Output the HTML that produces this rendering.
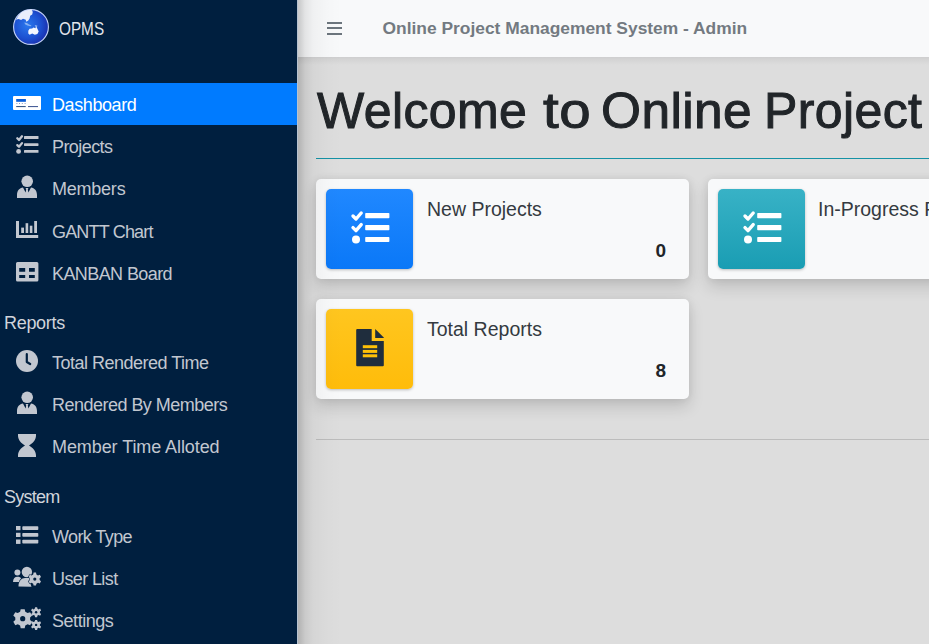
<!DOCTYPE html>
<html><head><meta charset="utf-8">
<style>
*{box-sizing:border-box;margin:0;padding:0}
html,body{width:929px;height:644px;overflow:hidden;font-family:"Liberation Sans",sans-serif;}
body{background:#dddddd;position:relative}
#shadow{position:absolute;left:297px;top:0;width:50px;height:644px;background:linear-gradient(to right,rgba(0,0,0,.2) 0px,rgba(0,0,0,.17) 3px,rgba(0,0,0,.085) 8px,rgba(0,0,0,.035) 16px,rgba(0,0,0,.01) 30px,rgba(0,0,0,0) 45px);z-index:4}
#side{position:absolute;left:0;top:0;width:297px;height:644px;background:#001f3f;z-index:5}
.logo{position:absolute;left:13px;top:9px;width:36px;height:36px}
.brand{position:absolute;left:59px;top:19.5px;color:#e2e6ec;font-size:17.5px;line-height:18px;transform:scaleX(0.875);transform-origin:0 0;white-space:nowrap}
.t{position:absolute;left:52px;font-size:18px;line-height:18px;color:#c2c7d0;white-space:nowrap}
.act{position:absolute;left:0;top:83px;width:297px;height:42px;background:#007bff}
.hdr{position:absolute;left:4px;font-size:18px;line-height:18px;color:#d0d4db;white-space:nowrap}
svg.ic{position:absolute;overflow:visible}
#nav{position:absolute;left:297px;top:0;width:632px;height:57px;background:#f8f9fa;z-index:3}
#navsh{position:absolute;left:297px;top:57px;width:632px;height:8px;background:linear-gradient(rgba(0,0,10,.065),rgba(0,0,10,.045) 30%,rgba(0,0,0,0));z-index:3}
#sline{position:absolute;left:297px;top:0;width:1px;height:644px;background:#b6c2d0;z-index:6}
.burger{position:absolute;left:30px;top:21.5px;width:15px;height:13px}
.burger i{position:absolute;left:0;width:15px;height:2px;background:#6c757d}
.title{position:absolute;left:85.5px;top:19px;color:#737a81;font-size:17.4px;line-height:18px;font-weight:bold;white-space:nowrap}
h1{position:absolute;left:317px;top:86px;font-size:50px;line-height:50px;letter-spacing:0.4px;font-weight:normal;color:#212529;white-space:nowrap;-webkit-text-stroke:1px #212529}
h1 span{position:absolute;top:0;transform-origin:0 0}
.hr1{position:absolute;left:316px;top:158px;width:613px;height:1px;background:#1592a5}
.hr2{position:absolute;left:316px;top:439px;width:613px;height:1px;background:#bcbcbc}
.card{position:absolute;width:373px;height:100px;background:#f8f9fa;border-radius:5px;box-shadow:0 0 8px rgba(0,0,0,.08),0 8px 16px rgba(0,0,0,.14)}
.box{position:absolute;left:10px;top:10px;width:87px;height:80px;border-radius:5px;box-shadow:0 1px 3px rgba(0,0,0,.25)}
.box svg{position:absolute;left:0;top:0}
.ctext{position:absolute;left:111px;top:20px;font-size:19.5px;line-height:20px;color:#343a40;white-space:nowrap}
.cnum{position:absolute;left:339.5px;top:61.5px;font-size:19px;line-height:20px;font-weight:bold;color:#212529}
</style></head><body>
<div id="shadow"></div>
<div id="side">
  <svg class="logo" width="36" height="36" viewBox="0 0 36 36">
    <defs>
      <radialGradient id="gl" cx="0.4" cy="0.45" r="0.65">
        <stop offset="0" stop-color="#2a78ee"/>
        <stop offset="0.6" stop-color="#1c4fd0"/>
        <stop offset="1" stop-color="#1a2aa8"/>
      </radialGradient>
    </defs>
    <circle cx="18" cy="18" r="17.4" fill="url(#gl)" stroke="#c4d3fa" stroke-width="1.1"/>
    <path d="M2.9 10.7 L5.5 10 L8.1 11 L10 9.7 L12.7 10.7 L13.3 12.7 L15.3 11.4 L16.6 9.4 L17.2 6.8 L19.2 5.5 L19.8 2.9 L18.5 0.6 A17.4 17.4 0 0 0 2.9 10.7 Z" fill="#e9eefb"/>
    <path d="M11.4 13.5 L14 14 L16 15.5 L18.5 16.5 L17.5 17.3 L14.5 16.5 L12 15.2 Z" fill="#9fc0f5" opacity="0.8"/>
    <path d="M21.8 16 L24.4 16.5 L24 17.9 L22 17.5 Z" fill="#9fc0f5" opacity="0.8"/>
    <path d="M15.3 21.8 L16.6 19.8 L19.2 19.5 L20.5 18.5 L22.4 19.2 L23.1 17.2 L24.4 19.8 L25.7 22.4 L24.4 25 L21.8 25.7 L19.2 24.4 L16.6 25.7 L15.3 24.4 Z" fill="#f4f7ff"/>
  </svg>
  <div class="brand">OPMS</div>

  <div class="act"></div>
  <svg class="ic" style="left:13px;top:96px" width="28" height="14" viewBox="0 0 28 14">
    <rect x="0" y="0" width="28" height="14" rx="1" fill="#fff"/>
    <rect x="3.2" y="3" width="9.7" height="2.8" fill="#0a5ed8"/>
    <g fill="#8a9cc8"><rect x="3.4" y="7" width="1" height="1"/><rect x="6" y="7" width="1" height="1"/><rect x="8.8" y="7" width="1" height="1"/><rect x="11.6" y="7" width="1" height="1"/></g>
    <rect x="3.2" y="10" width="9.5" height="1.1" fill="#3a5a88"/>
    <rect x="15" y="10" width="10" height="1.1" fill="#4a5f98"/>
  </svg>
  <div class="t" style="top:96px;color:#fff;letter-spacing:-0.41px">Dashboard</div>

  <svg class="ic" style="left:16px;top:135px" width="23" height="19" viewBox="0 0 23 19">
    <g fill="#c2c7d0">
      <path d="M1.3 3.3 L3 5 L6 1.3" stroke="#c2c7d0" stroke-width="2.3" fill="none" stroke-linecap="round" stroke-linejoin="round"/>
      <path d="M1.3 10.1 L3 11.8 L6 8.1" stroke="#c2c7d0" stroke-width="2.3" fill="none" stroke-linecap="round" stroke-linejoin="round"/>
      <circle cx="2.6" cy="16.4" r="2.4"/>
      <rect x="8" y="1" width="14.5" height="3" rx="0.6"/>
      <rect x="8" y="8.3" width="14.5" height="2.6" rx="0.6"/>
      <rect x="8" y="15" width="14.5" height="2.8" rx="0.6"/>
    </g>
  </svg>
  <div class="t" style="top:138px;letter-spacing:-0.57px">Projects</div>

  <svg class="ic" style="left:17px;top:175px" width="20" height="23" viewBox="0 0 20 23">
    <g fill="#c2c7d0">
      <circle cx="10.2" cy="6.3" r="5.8"/>
      <path d="M0 23 L0 20 C0 15.5 2.5 13 6 12.5 L8.6 17.5 L9.2 14.5 L8.6 13 L11.4 13 L10.8 14.5 L11.4 17.5 L14 12.5 C17.5 13 20 15.5 20 20 L20 23 Z"/>
    </g>
  </svg>
  <div class="t" style="top:180px;letter-spacing:-0.23px">Members</div>

  <svg class="ic" style="left:16px;top:221px" width="23" height="17" viewBox="0 0 23 17">
    <g fill="#c2c7d0">
      <rect x="0" y="0" width="3" height="17"/>
      <rect x="0" y="14" width="22.2" height="3"/>
      <rect x="5.2" y="6.6" width="2.8" height="5.4"/>
      <rect x="9.6" y="2.2" width="2.6" height="9.8"/>
      <rect x="13.8" y="4.7" width="2.6" height="7.3"/>
      <rect x="18.2" y="0" width="2.8" height="12"/>
    </g>
  </svg>
  <div class="t" style="top:223px;letter-spacing:-0.82px">GANTT Chart</div>

  <svg class="ic" style="left:16px;top:262px" width="23" height="20" viewBox="0 0 23 20">
    <path fill="#c2c7d0" fill-rule="evenodd" d="M1.5 0 H20.9 A1.5 1.5 0 0 1 22.4 1.5 V18 A1.5 1.5 0 0 1 20.9 19.5 H1.5 A1.5 1.5 0 0 1 0 18 V1.5 A1.5 1.5 0 0 1 1.5 0 Z M3.2 6 V9.7 H9.2 V6 Z M13 6 V9.7 H18.8 V6 Z M3.2 12.9 V16 H9.2 V12.9 Z M13 12.9 V16 H18.8 V12.9 Z"/>
  </svg>
  <div class="t" style="top:265px;letter-spacing:-0.59px">KANBAN Board</div>

  <div class="hdr" style="top:314px;letter-spacing:-0.3px">Reports</div>

  <svg class="ic" style="left:16px;top:350px" width="22" height="22" viewBox="0 0 22 22">
    <circle cx="11" cy="11" r="11" fill="#c2c7d0"/>
    <path d="M10.8 4.2 V12 L14.2 14" fill="none" stroke="#001f3f" stroke-width="2.2" stroke-linecap="round" stroke-linejoin="round"/>
  </svg>
  <div class="t" style="top:353.5px;letter-spacing:-0.5px">Total Rendered Time</div>

  <svg class="ic" style="left:17px;top:391px" width="20" height="23" viewBox="0 0 20 23">
    <g fill="#c2c7d0">
      <circle cx="10.2" cy="6.3" r="5.8"/>
      <path d="M0 23 L0 20 C0 15.5 2.5 13 6 12.5 L8.6 17.5 L9.2 14.5 L8.6 13 L11.4 13 L10.8 14.5 L11.4 17.5 L14 12.5 C17.5 13 20 15.5 20 20 L20 23 Z"/>
    </g>
  </svg>
  <div class="t" style="top:395.5px;letter-spacing:-0.52px">Rendered By Members</div>

  <svg class="ic" style="left:18px;top:434px" width="18" height="23" viewBox="0 0 18 23">
    <path fill="#c2c7d0" d="M0 0 H18 V1.5 C18 6 15 9 11 11.5 C15 14 18 17 18 21.5 V23 H0 V21.5 C0 17 3 14 7 11.5 C3 9 0 6 0 1.5 Z"/>
  </svg>
  <div class="t" style="top:438px;letter-spacing:-0.08px">Member Time Alloted</div>

  <div class="hdr" style="top:488px;letter-spacing:-0.76px">System</div>

  <svg class="ic" style="left:16px;top:526px" width="23" height="18" viewBox="0 0 23 18">
    <g fill="#c2c7d0">
      <rect x="0" y="0" width="4.5" height="4.2"/>
      <rect x="0" y="6.8" width="4.5" height="4.2"/>
      <rect x="0" y="13.5" width="4.5" height="4.4"/>
      <rect x="6.3" y="0.2" width="16" height="3.8" rx="0.8"/>
      <rect x="6.3" y="7" width="16" height="3.8" rx="0.8"/>
      <rect x="6.3" y="13.7" width="16" height="3.8" rx="0.8"/>
    </g>
  </svg>
  <div class="t" style="top:528px;letter-spacing:-0.6px">Work Type</div>

  <svg class="ic" style="left:12px;top:566px" width="30" height="22" viewBox="0 0 30 22">
    <g fill="#c2c7d0">
      <circle cx="5.4" cy="6.4" r="3"/>
      <path d="M1 16 C1 12.5 3 10.8 5.4 10.8 C7.4 10.8 8.6 11.5 9.2 12.2 C8 13.3 7.2 14.8 7 16 Z"/>
      <circle cx="14.9" cy="6" r="5.2"/>
      <path d="M6.5 20.5 C6.5 15 9.5 12 13 12 L17.5 12 C18.2 12 18.8 12.1 19.3 12.3 C18 14.5 18 17.5 19.5 20.8 Z"/>
    </g>
    <g transform="translate(22.8 13.1)">
      <path fill="#c2c7d0" stroke="#001f3f" stroke-width="1.1" paint-order="stroke" d="M-1.2 -6.5 H1.2 L1.6 -4.6 L3.2 -3.7 L5 -4.3 L6.2 -2.2 L4.8 -0.9 V0.9 L6.2 2.2 L5 4.3 L3.2 3.7 L1.6 4.6 L1.2 6.5 H-1.2 L-1.6 4.6 L-3.2 3.7 L-5 4.3 L-6.2 2.2 L-4.8 0.9 V-0.9 L-6.2 -2.2 L-5 -4.3 L-3.2 -3.7 L-1.6 -4.6 Z"/>
      <circle r="1.6" fill="#001f3f"/>
    </g>
  </svg>
  <div class="t" style="top:570px;letter-spacing:-0.61px">User List</div>

  <svg class="ic" style="left:12px;top:607px" width="30" height="23" viewBox="0 0 30 23">
    <g transform="translate(10.7 11.7)">
      <path fill="#c2c7d0" d="M-2 -9.5 H2 L2.6 -6.9 L4.9 -5.6 L7.4 -6.5 L9.4 -3.1 L7.4 -1.3 V1.3 L9.4 3.1 L7.4 6.5 L4.9 5.6 L2.6 6.9 L2 9.5 H-2 L-2.6 6.9 L-4.9 5.6 L-7.4 6.5 L-9.4 3.1 L-7.4 1.3 V-1.3 L-9.4 -3.1 L-7.4 -6.5 L-4.9 -5.6 L-2.6 -6.9 Z"/>
      <circle r="2.6" fill="#001f3f"/>
    </g>
    <g transform="translate(24.1 5.2)">
      <path fill="#c2c7d0" d="M-1 -5 H1 L1.4 -3.4 L2.6 -2.8 L4 -3.6 L5 -1.8 L3.8 -0.7 V0.7 L5 1.8 L4 3.6 L2.6 2.8 L1.4 3.4 L1 5 H-1 L-1.4 3.4 L-2.6 2.8 L-4 3.6 L-5 1.8 L-3.8 0.7 V-0.7 L-5 -1.8 L-4 -3.6 L-2.6 -2.8 L-1.4 -3.4 Z"/>
      <circle r="1.2" fill="#001f3f"/>
    </g>
    <g transform="translate(24.1 17.9)">
      <path fill="#c2c7d0" d="M-1 -5 H1 L1.4 -3.4 L2.6 -2.8 L4 -3.6 L5 -1.8 L3.8 -0.7 V0.7 L5 1.8 L4 3.6 L2.6 2.8 L1.4 3.4 L1 5 H-1 L-1.4 3.4 L-2.6 2.8 L-4 3.6 L-5 1.8 L-3.8 0.7 V-0.7 L-5 -1.8 L-4 -3.6 L-2.6 -2.8 L-1.4 -3.4 Z"/>
      <circle r="1.2" fill="#001f3f"/>
    </g>
  </svg>
  <div class="t" style="top:612px;letter-spacing:-0.46px">Settings</div>
</div>

<div id="navsh"></div><div id="sline"></div>
<div id="nav">
  <div class="burger"><i style="top:0"></i><i style="top:5.5px"></i><i style="top:11px"></i></div>
  <div class="title">Online Project Management System - Admin</div>
</div>

<h1><span style="left:0">Welcome</span><span style="left:225.5px;transform:scaleX(1.13)">to</span><span style="left:284px;transform:scaleX(1.028)">Online</span><span style="left:447px">Project</span><span style="left:622px">Management</span></h1>
<div class="hr1"></div>

<div class="card" style="left:316px;top:179px">
  <div class="box" style="background:linear-gradient(#2088ff,#0a78f8)">
    <svg width="87" height="80" viewBox="0 0 87 80"><g fill="#fff">
      <path d="M27 27 L30 30 L35.2 24" stroke="#fff" stroke-width="3.4" fill="none" stroke-linecap="round" stroke-linejoin="round"/>
      <path d="M27 38.6 L30 41.6 L35.2 35.6" stroke="#fff" stroke-width="3.4" fill="none" stroke-linecap="round" stroke-linejoin="round"/>
      <circle cx="30" cy="50.5" r="4"/>
      <rect x="39.2" y="24" width="24.2" height="5.2" rx="0.8"/>
      <rect x="39.2" y="36" width="24.2" height="5.2" rx="0.8"/>
      <rect x="39.2" y="48" width="24.2" height="5" rx="0.8"/>
    </g></svg>
  </div>
  <div class="ctext">New Projects</div>
  <div class="cnum">0</div>
</div>

<div class="card" style="left:708px;top:179px">
  <div class="box" style="background:linear-gradient(#38b2c6,#1a9db3)">
    <svg width="87" height="80" viewBox="0 0 87 80"><g fill="#fff">
      <path d="M27 27 L30 30 L35.2 24" stroke="#fff" stroke-width="3.4" fill="none" stroke-linecap="round" stroke-linejoin="round"/>
      <path d="M27 38.6 L30 41.6 L35.2 35.6" stroke="#fff" stroke-width="3.4" fill="none" stroke-linecap="round" stroke-linejoin="round"/>
      <circle cx="30" cy="50.5" r="4"/>
      <rect x="39.2" y="24" width="24.2" height="5.2" rx="0.8"/>
      <rect x="39.2" y="36" width="24.2" height="5.2" rx="0.8"/>
      <rect x="39.2" y="48" width="24.2" height="5" rx="0.8"/>
    </g></svg>
  </div>
  <div class="ctext" style="left:110px">In-Progress Projects</div>
  <div class="cnum">0</div>
</div>

<div class="card" style="left:316px;top:299px">
  <div class="box" style="background:linear-gradient(#ffc61f,#ffbc0a)">
    <svg width="87" height="80" viewBox="0 0 87 80">
      <path fill="#1f2d3d" d="M31.2 20 H45.7 V32 H57.8 V56.3 A1 1 0 0 1 56.8 57.3 H31.2 A1 1 0 0 1 30.2 56.3 V21 A1 1 0 0 1 31.2 20 Z"/>
      <path fill="#1f2d3d" d="M49.2 20 L57.8 28.6 V28.9 H49.2 Z"/>
      <rect x="36.8" y="36.2" width="14.4" height="3" fill="#ffc107"/>
      <rect x="36.8" y="40.9" width="14.4" height="3" fill="#ffc107"/>
      <rect x="36.8" y="45.3" width="14.4" height="3" fill="#ffc107"/>
    </svg>
  </div>
  <div class="ctext">Total Reports</div>
  <div class="cnum">8</div>
</div>

<div class="hr2"></div>
</body></html>
